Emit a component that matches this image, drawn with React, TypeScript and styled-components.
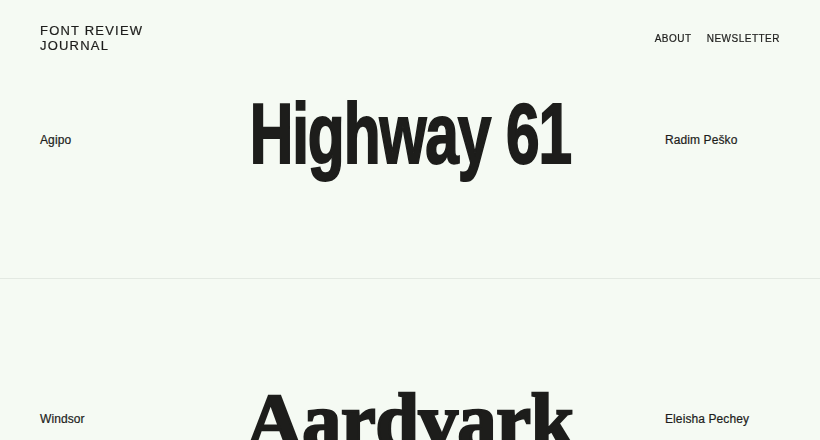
import React from "react";
import styled, { createGlobalStyle } from "styled-components";

const Global = createGlobalStyle`
  html, body { margin: 0; padding: 0; background: #f5faf3; }
  body { color: #1d1d1b; font-family: "Liberation Sans", Arial, sans-serif; overflow: hidden; }
`;

const Header = styled.header`
  position: fixed;
  top: 0;
  left: 0;
  right: 0;
  display: flex;
  justify-content: space-between;
  align-items: center;
  padding: 23px 40px 0 40px;
  z-index: 2;
`;

const Logo = styled.div`
  font-size: 13px;
  line-height: 15px;
  letter-spacing: 1.2px;
  text-transform: uppercase;
  -webkit-text-stroke: 0.2px #1d1d1b;
`;

const Nav = styled.nav`
  display: flex;
  gap: 15px;
  align-self: center;
  padding-top: 1px;
`;

const NavLink = styled.a`
  font-size: 10px;
  letter-spacing: 0.5px;
  text-transform: uppercase;
  color: inherit;
  text-decoration: none;
  -webkit-text-stroke: 0.2px #1d1d1b;
`;

const List = styled.main`
  display: flex;
  flex-direction: column;
`;

const Row = styled.section`
  height: 278px;
  border-bottom: 1px solid #e3e9e2;
  display: grid;
  grid-template-columns: 115px 1fr 115px;
  align-items: center;
  padding: 0 40px;
`;

const Label = styled.div`
  font-size: 12px;
  letter-spacing: 0.1px;
  padding-top: 2px;
  -webkit-text-stroke: 0.2px #1d1d1b;
`;

const Specimen = styled.div<{ $offset: number }>`
  display: flex;
  justify-content: center;
  margin-top: ${(p) => p.$offset}px;
`;

const Grotesk = styled.span`
  display: inline-block;
  font-family: "Liberation Sans", Arial, sans-serif;
  font-weight: 700;
  font-size: 85px;
  line-height: 1;
  letter-spacing: -1.5px;
  white-space: nowrap;
  -webkit-text-stroke: 2px #1d1d1b;
  transform: scaleX(0.71);
`;

const Serif = styled.span`
  display: inline-block;
  font-family: "Liberation Serif", "Times New Roman", serif;
  font-weight: 700;
  font-size: 78px;
  line-height: 1;
  white-space: nowrap;
  -webkit-text-stroke: 2.6px #1d1d1b;
  letter-spacing: -0.2px;
`;

const reviews = [
  { font: "Agipo", designer: "Radim Peško", sample: "Highway 61", kind: "grotesk", offset: -12 },
  { font: "Windsor", designer: "Eleisha Pechey", sample: "Aardvark", kind: "serif", offset: 6 },
];

export default function App() {
  return (
    <>
      <Global />
      <Header>
        <Logo>
          Font Review
          <br />
          Journal
        </Logo>
        <Nav>
          <NavLink href="#">About</NavLink>
          <NavLink href="#">Newsletter</NavLink>
        </Nav>
      </Header>
      <List>
        {reviews.map((r) => (
          <Row key={r.font}>
            <Label>{r.font}</Label>
            <Specimen $offset={r.offset}>
              {r.kind === "grotesk" ? <Grotesk>{r.sample}</Grotesk> : <Serif>{r.sample}</Serif>}
            </Specimen>
            <Label>{r.designer}</Label>
          </Row>
        ))}
      </List>
    </>
  );
}
